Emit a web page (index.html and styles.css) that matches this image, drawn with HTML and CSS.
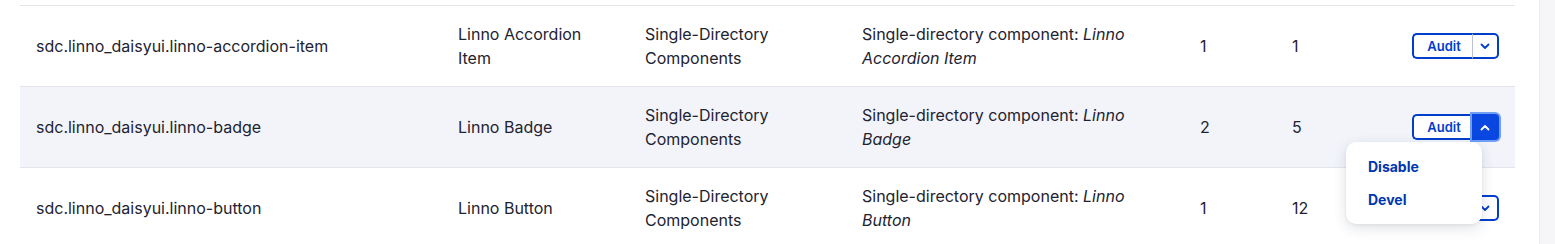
FILE: index.html
```html
<!DOCTYPE html>
<html lang="en">
<head>
<meta charset="utf-8">
<title>Components</title>
<link rel="stylesheet" href="styles.css">
</head>
<body>
<div class="page">
  <main class="main">
    <table class="list">
      <colgroup>
        <col class="c-id"><col class="c-label"><col class="c-group"><col class="c-desc"><col class="c-n1"><col class="c-n2"><col class="c-ops">
      </colgroup>
      <tbody>
        <tr>
          <td>sdc.linno_daisyui.linno-accordion-item</td>
          <td class="narrow">Linno Accordion Item</td>
          <td>Single-Directory Components</td>
          <td class="desc">Single-directory component: <em>Linno Accordion Item</em></td>
          <td>1</td>
          <td>1</td>
          <td class="ops">
            <div class="dropbutton">
              <button class="db-main">Audit</button>
              <button class="db-toggle" aria-label="More">
                <svg width="10" height="7" viewBox="0 0 10 7"><path d="M1.5 1.5 L5 5 L8.5 1.5" fill="none" stroke="currentColor" stroke-width="1.8" stroke-linecap="round" stroke-linejoin="round"/></svg>
              </button>
            </div>
          </td>
        </tr>
        <tr class="hl">
          <td>sdc.linno_daisyui.linno-badge</td>
          <td class="narrow">Linno Badge</td>
          <td>Single-Directory Components</td>
          <td class="desc">Single-directory component: <em>Linno Badge</em></td>
          <td>2</td>
          <td>5</td>
          <td class="ops">
            <div class="dropbutton open">
              <button class="db-main">Audit</button>
              <button class="db-toggle" aria-label="Less">
                <svg width="10" height="7" viewBox="0 0 10 7"><path d="M1.5 5.5 L5 2 L8.5 5.5" fill="none" stroke="currentColor" stroke-width="1.8" stroke-linecap="round" stroke-linejoin="round"/></svg>
              </button>
              <ul class="menu">
                <li><a href="#">Disable</a></li>
                <li><a href="#">Devel</a></li>
              </ul>
            </div>
          </td>
        </tr>
        <tr>
          <td>sdc.linno_daisyui.linno-button</td>
          <td class="narrow">Linno Button</td>
          <td>Single-Directory Components</td>
          <td class="desc">Single-directory component: <em>Linno Button</em></td>
          <td>1</td>
          <td>12</td>
          <td class="ops">
            <div class="dropbutton">
              <button class="db-main">Audit</button>
              <button class="db-toggle" aria-label="More">
                <svg width="10" height="7" viewBox="0 0 10 7"><path d="M1.5 1.5 L5 5 L8.5 1.5" fill="none" stroke="currentColor" stroke-width="1.8" stroke-linecap="round" stroke-linejoin="round"/></svg>
              </button>
            </div>
          </td>
        </tr>
      </tbody>
    </table>
  </main>
  <aside class="rail"></aside>
</div>
</body>
</html>
```

FILE: styles.css
```css
* { box-sizing: border-box; }
html, body { margin: 0; padding: 0; background: #fff; }
body {
  font-family: Inter, "Noto Sans", "Liberation Sans", sans-serif;
  font-size: 16px;
  color: #222330;
  height: 244px;
  overflow: hidden;
}
.page {
  display: flex;
  height: 244px;
}
.main {
  width: 1539px;
  padding: 5px 24px 0 20px;
}
.rail {
  width: 16px;
  background: #f6f6f9;
  border-left: 1px solid #ececf1;
}
.list {
  width: 1495px;
  border-collapse: collapse;
  table-layout: fixed;
  border-top: 1px solid #e3e4ea;
}
.c-id { width: 422px; }
.c-label { width: 187px; }
.c-group { width: 217px; }
.c-desc { width: 338px; }
.c-n1 { width: 92px; }
.c-n2 { width: 100px; }
.c-ops { width: 139px; }
.list td {
  height: 80px;
  padding: 16px 16px;
  line-height: 24px;
  vertical-align: middle;
  border-bottom: 1px solid #e3e4ea;
}
.list td.narrow { padding-right: 30px; }
.list td.desc { padding-right: 30px; }
.list tr.hl td { background: #f2f4fa; }
.list td.ops { text-align: right; }
.dropbutton {
  position: relative;
  display: inline-flex;
  vertical-align: middle;
  height: 26px;
}
.dropbutton button {
  font-family: inherit;
  margin: 0;
  background: #fff;
  color: #003ecc;
  cursor: pointer;
  height: 26px;
  padding: 0;
}
.db-main {
  width: 60px;
  border: 2px solid #003ecc;
  border-right: 0;
  border-radius: 5px 0 0 5px;
  font-size: 13px;
  font-weight: 600;
  line-height: 22px;
  padding-left: 2px !important;
}
.db-toggle {
  width: 27px;
  border: 2px solid #003ecc;
  border-left: 1px solid #b9c2d6;
  border-radius: 0 5px 5px 0;
  display: flex;
  align-items: center;
  justify-content: center;
}
.db-toggle svg { display: block; }
.open .db-toggle {
  background: #0a47e0;
  color: #fff;
  border-color: #0a47e0;
  box-shadow: 0 0 0 2px #6f9ff5;
  border-radius: 0 4px 4px 0;
}
.menu {
  position: absolute;
  right: 17px;
  top: 28px;
  width: 136px;
  margin: 0;
  padding: 8px 0;
  list-style: none;
  background: #fff;
  border-radius: 10px;
  box-shadow: 0 4px 14px rgba(30, 40, 70, 0.14), 0 1px 3px rgba(30, 40, 70, 0.06);
  text-align: left;
  z-index: 2;
}
.menu li { height: 33px; display: flex; align-items: center; }
.menu a {
  padding-left: 22px;
  font-size: 14px;
  font-weight: 700;
  color: #0036b1;
  text-decoration: none;
  line-height: 20px;
}
```
